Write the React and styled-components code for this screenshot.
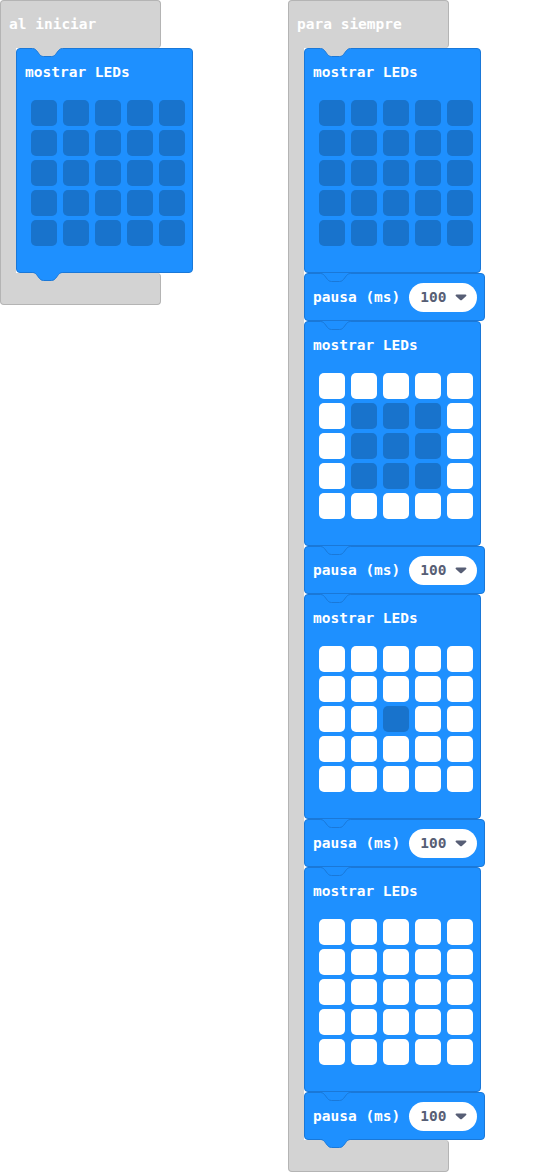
import styled, { createGlobalStyle } from "styled-components";

const BLUE = "#1e90ff";
const BLUE_LINE = "#1a78d8";
const LED_OFF = "#1873cc";
const GREY = "#d3d3d3";
const GREY_LINE = "#b4b4b4";

const Global = createGlobalStyle`
  body {
    margin: 0;
    background: #ffffff;
    font-family: "DejaVu Sans Mono", "Liberation Mono", monospace;
  }
`;

const Canvas = styled.div`
  display: flex;
  align-items: flex-start;
  gap: 95px;
`;

const CBlock = styled.div`
  display: flex;
  flex-direction: column;
  align-items: flex-start;
`;

const CHeader = styled.div`
  box-sizing: border-box;
  width: 161px;
  height: 48px;
  padding: 0 0 2px 8px;
  display: flex;
  align-items: center;
  background: ${GREY};
  border: 1px solid ${GREY_LINE};
  border-bottom: none;
  border-radius: 4px 4px 4px 0;
  color: #ffffff;
  font-weight: bold;
  font-size: 14.5px;
`;

const CMiddle = styled.div`
  display: flex;
`;

const CArm = styled.div`
  box-sizing: border-box;
  width: 16px;
  background: ${GREY};
  border-left: 1px solid ${GREY_LINE};
`;

const CFooter = styled.div`
  box-sizing: border-box;
  width: 161px;
  height: 32px;
  background: ${GREY};
  border: 1px solid ${GREY_LINE};
  border-top: none;
  border-radius: 0 4px 4px 4px;
`;

const Stack = styled.div`
  display: flex;
  flex-direction: column;
`;

const Block = styled.div`
  position: relative;
  box-sizing: border-box;
  width: ${(p) => p.$w}px;
  height: ${(p) => p.$h}px;
  background: ${BLUE};
  border: 1px solid ${BLUE_LINE};
  border-radius: 4px;
  color: #ffffff;
  font-weight: bold;
  font-size: 14.5px;
`;

const ShowBlock = styled(Block)`
  padding-top: 13px;
`;

const PauseBlock = styled(Block)`
  display: flex;
  align-items: center;
  gap: 9px;
  padding-left: 8px;
`;

const Title = styled.div`
  padding-left: 8px;
  line-height: 20px;
  white-space: nowrap;
`;

const LedGrid = styled.div`
  display: grid;
  grid-template-columns: repeat(5, 26px);
  grid-auto-rows: 26px;
  column-gap: 6px;
  row-gap: 4px;
  margin: 18px 0 0 14px;
`;

const Led = styled.div`
  border-radius: 5px;
  background: ${(p) => (p.$on ? "#ffffff" : LED_OFF)};
`;

const Label = styled.span`
  white-space: nowrap;
  line-height: 20px;
`;

const Pill = styled.div`
  display: flex;
  align-items: center;
  gap: 8px;
  height: 29px;
  padding: 0 10px 0 11px;
  border-radius: 15px;
  background: #ffffff;
  color: #575e75;
`;

const Notch = styled.svg`
  position: absolute;
  left: 15px;
  top: ${(p) => (p.$tab ? "100%" : "-1px")};
  width: 31px;
  height: 10px;
  overflow: visible;
`;

const CURVE = "c2 0 3 1 4 2 l3 4 c1 1 2 2 4 2 h8 c2 0 3 -1 4 -2 l3 -4 c1 -1 2 -2 4 -2";

function NotchShape({ fill, tab }) {
  return (
    <Notch $tab={tab} viewBox="0 0 31 10">
      <path d={`M0 0 L0.5 0.5 ${CURVE} L31 0 Z`} fill={fill} />
      <path d={`M0.5 0.5 ${CURVE}`} fill="none" stroke={BLUE_LINE} strokeWidth="1" />
    </Notch>
  );
}

function Caret() {
  return (
    <svg width="12" height="8" viewBox="0 0 12 8">
      <path d="M1.5 1.5 h9 c0.8 0 1.2 0.8 0.7 1.4 l-4.3 4 c-0.5 0.4 -1.3 0.4 -1.8 0 l-4.3 -4 c-0.5 -0.6 -0.1 -1.4 0.7 -1.4 z" fill="#575e75" />
    </svg>
  );
}

function ShowLeds({ pattern, behind, last }) {
  return (
    <ShowBlock $w={177} $h={225}>
      <NotchShape fill={behind} />
      <Title>mostrar LEDs</Title>
      <LedGrid>
        {pattern.join("").split("").map((c, i) => (
          <Led key={i} $on={c === "#"} />
        ))}
      </LedGrid>
      {last && <NotchShape fill={BLUE} tab />}
    </ShowBlock>
  );
}

function Pause({ last }) {
  return (
    <PauseBlock $w={181} $h={48}>
      <NotchShape fill={BLUE} />
      <Label>pausa (ms)</Label>
      <Pill>
        <Label>100</Label>
        <Caret />
      </Pill>
      {last && <NotchShape fill={BLUE} tab />}
    </PauseBlock>
  );
}

const OFF = [".....", ".....", ".....", ".....", "....."];
const RING = ["#####", "#...#", "#...#", "#...#", "#####"];
const DOT = ["#####", "#####", "##.##", "#####", "#####"];
const FULL = ["#####", "#####", "#####", "#####", "#####"];

function Container({ label, children }) {
  return (
    <CBlock>
      <CHeader>{label}</CHeader>
      <CMiddle>
        <CArm />
        <Stack>{children}</Stack>
      </CMiddle>
      <CFooter />
    </CBlock>
  );
}

export default function App() {
  const frames = [OFF, RING, DOT, FULL];
  return (
    <>
      <Global />
      <Canvas>
        <Container label="al iniciar">
          <ShowLeds pattern={OFF} behind={GREY} last />
        </Container>
        <Container label="para siempre">
          {frames.map((f, i) => [
            <ShowLeds key={"s" + i} pattern={f} behind={i === 0 ? GREY : BLUE} />,
            <Pause key={"p" + i} last={i === frames.length - 1} />,
          ])}
        </Container>
      </Canvas>
    </>
  );
}
